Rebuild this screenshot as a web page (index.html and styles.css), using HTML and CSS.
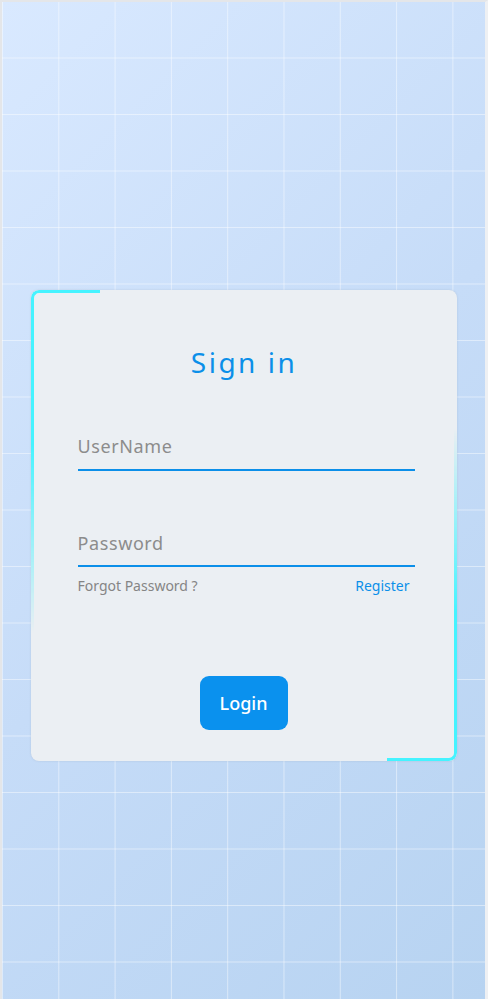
FILE: index.html
```html
<!DOCTYPE html>
<html lang="en">
<head>
<meta charset="utf-8">
<title>Sign in</title>
<link rel="stylesheet" href="styles.css">
</head>
<body>
<div class="page">
  <form class="card">
    <h2 class="title">Sign in</h2>
    <div class="field field-user">
      <span class="placeholder">UserName</span>
    </div>
    <div class="field field-pass">
      <span class="placeholder">Password</span>
    </div>
    <div class="links">
      <a class="forgot">Forgot Password ?</a>
      <a class="register">Register</a>
    </div>
    <div class="actions">
      <button type="button" class="login">Login</button>
    </div>
  </form>
</div>
</body>
</html>
```

FILE: styles.css
```css
* { box-sizing: border-box; }
html, body { margin: 0; padding: 0; }
body {
  font-family: "Noto Sans", "Open Sans", sans-serif;
  width: 488px;
  height: 999px;
  overflow: hidden;
}
.page {
  height: 999px;
  border-top: 2px solid #e4e6e9;
  border-left: 2px solid #e4e6e9;
  border-right: 3px solid #eef0f3;
  background-color: #c8defa;
  background-image:
    linear-gradient(to right, rgba(255,255,255,0.45) 1px, transparent 1px),
    linear-gradient(to bottom, rgba(255,255,255,0.45) 1px, transparent 1px),
    linear-gradient(135deg, #d9e9ff 0%, #c6dcf8 50%, #b7d3f1 100%);
  background-size: 56.3px 56.5px, 56.3px 56.5px, 100% 100%;
  background-position: 0 -1px, 0 -1px, 0 0;
  padding-top: 288px;
  display: flex;
  flex-direction: column;
  align-items: center;
}
.card {
  position: relative;
  width: 426px;
  height: 471px;
  background: #ebeff3;
  border-radius: 8px;
  box-shadow: 0 0 2px rgba(120,130,140,0.25);
  padding: 52px 42px 0 47px;
  margin: 0;
}
.card::before {
  content: "";
  position: absolute;
  top: 0;
  left: 0;
  width: 66px;
  height: 340px;
  border-top: 3px solid #45f3ff;
  border-left: 3px solid #45f3ff;
  border-top-left-radius: 8px;
  -webkit-mask-image: linear-gradient(to bottom, #000 45%, transparent 100%);
  mask-image: linear-gradient(to bottom, #000 45%, transparent 100%);
}
.card::after {
  content: "";
  position: absolute;
  bottom: 0;
  right: 0;
  width: 67px;
  height: 330px;
  border-bottom: 3px solid #45f3ff;
  border-right: 3px solid #45f3ff;
  border-bottom-right-radius: 8px;
  -webkit-mask-image: linear-gradient(to top, #000 45%, transparent 100%);
  mask-image: linear-gradient(to top, #000 45%, transparent 100%);
}
.title {
  margin: 0;
  text-align: center;
  font-size: 28px;
  line-height: 40px;
  font-weight: 400;
  letter-spacing: 2.5px;
  color: #0b8fe9;
  padding-right: 4px;
}
.field {
  border-bottom: 2px solid #0b8fe9;
  padding-bottom: 11px;
}
.field-user { margin-top: 52px; }
.field-pass { margin-top: 60px; padding-bottom: 10px; }
.placeholder {
  display: block;
  font-size: 18px;
  line-height: 24px;
  letter-spacing: 0.6px;
  color: #8c8c8c;
}
.links {
  display: flex;
  justify-content: space-between;
  margin-top: 9px;
  padding-right: 5px;
  font-size: 14px;
  line-height: 20px;
}
.forgot { color: #858585; }
.register { color: #0b8fe9; }
.actions {
  display: flex;
  justify-content: center;
  margin-top: 80px;
  padding-right: 5px;
}
.login {
  width: 88px;
  height: 54px;
  border: none;
  border-radius: 9px;
  background: #0a91ee;
  color: #ffffff;
  font-family: "Noto Sans", "Open Sans", sans-serif;
  font-size: 18px;
  font-weight: 500;
  padding: 0;
}
```
